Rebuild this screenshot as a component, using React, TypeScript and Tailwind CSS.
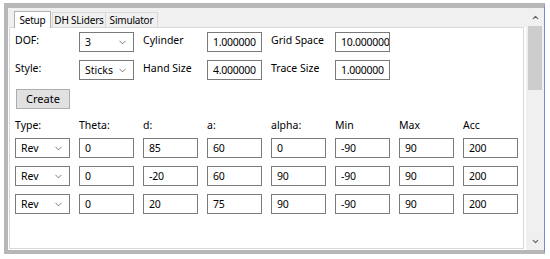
import { ChevronDown, ChevronUp } from "lucide-react";

const COLS = ["Type:", "Theta:", "d:", "a:", "alpha:", "Min", "Max", "Acc"];

const ROWS = [
  ["0", "85", "60", "0", "-90", "90", "200"],
  ["0", "-20", "60", "90", "-90", "90", "200"],
  ["0", "20", "75", "90", "-90", "90", "200"],
];

function Combo({ value }: { value: string }) {
  return (
    <div className="flex h-[20px] w-[55px] items-center justify-between border border-[#7a7a7a] bg-white pl-[5px] pr-[5px]">
      <span>{value}</span>
      <ChevronDown className="h-[11px] w-[11px] text-[#444]" strokeWidth={1.5} />
    </div>
  );
}

function Field({ value }: { value: string }) {
  return (
    <div className="flex h-[20px] w-[55px] items-center overflow-hidden border border-[#7a7a7a] bg-white pl-[5px] tracking-[-0.25px]">
      {value}
    </div>
  );
}

export default function App() {
  return (
    <div
      className="h-[259px] w-[550px] whitespace-nowrap bg-white pl-[4px] pt-[3px] text-[10.5px] leading-[16px] text-black"
      style={{ fontFamily: '"Noto Sans", "Open Sans", sans-serif' }}
    >
      <div className="flex h-[251px] w-[541px] border-t-[5px] border-b-[4px] border-l-[4px] border-r-[1px] border-[#b7b7b7] border-r-[#6f8dce]">
        {/* tab control */}
        <div className="flex flex-1 flex-col bg-white">
          <div className="flex h-[19px] items-end bg-[#f0f0f0] pl-[6px] text-[10px] tracking-[-0.2px]">
            <div className="relative z-10 -mb-px flex h-[17px] w-[37px] items-center justify-center border border-b-0 border-[#b0b0b0] bg-white">
              Setup
            </div>
            <div className="ml-px flex h-[15px] w-[54px] items-center justify-center border border-b-0 border-[#d9d9d9] bg-[#f0f0f0]">
              DH SLiders
            </div>
            <div className="flex h-[15px] w-[52px] items-center justify-center border border-b-0 border-l-0 border-[#d9d9d9] bg-[#f0f0f0]">
              Simulator
            </div>
          </div>
          <div className="mb-[1px] ml-[1px] mr-[2px] flex-1 border border-[#d9d9d9] bg-white pl-[5px] pt-[4px]">
            <div className="grid grid-cols-[55px_55px_55px_55px_55px_55px] gap-x-[9px] gap-y-[8px]">
              <span>DOF:</span>
              <Combo value="3" />
              <span>Cylinder</span>
              <Field value="1.000000" />
              <span>Grid Space</span>
              <Field value="10.000000" />
              <span>Style:</span>
              <Combo value="Sticks" />
              <span>Hand Size</span>
              <Field value="4.000000" />
              <span>Trace Size</span>
              <Field value="1.000000" />
            </div>
            <button className="ml-px mt-[9px] flex h-[20px] w-[54px] items-center justify-center border border-[#adadad] bg-[#e1e1e1] text-[11px]">
              Create
            </button>
            <div className="mt-[8px] grid grid-cols-[55px_55px_55px_55px_55px_55px_55px_55px] gap-x-[9px] gap-y-[8px]">
              {COLS.map((c) => (
                <span key={c} className="-mb-[3px] leading-[16px]">
                  {c}
                </span>
              ))}
              {ROWS.map((row, i) => (
                <div key={i} className="contents">
                  <Combo value="Rev" />
                  {row.map((v, j) => (
                    <Field key={j} value={v} />
                  ))}
                </div>
              ))}
            </div>
          </div>
        </div>
        {/* scrollbar */}
        <div className="flex w-[18px] flex-col bg-[#f0f0f0]">
          <div className="flex h-[18px] items-center justify-center">
            <ChevronUp className="h-[9px] w-[9px] text-[#606060]" strokeWidth={3} />
          </div>
          <div className="mx-[2px] h-[64px] bg-[#cdcdcd]" />
          <div className="flex-1" />
          <div className="flex h-[18px] items-center justify-center">
            <ChevronDown className="h-[9px] w-[9px] text-[#606060]" strokeWidth={3} />
          </div>
        </div>
      </div>
    </div>
  );
}
